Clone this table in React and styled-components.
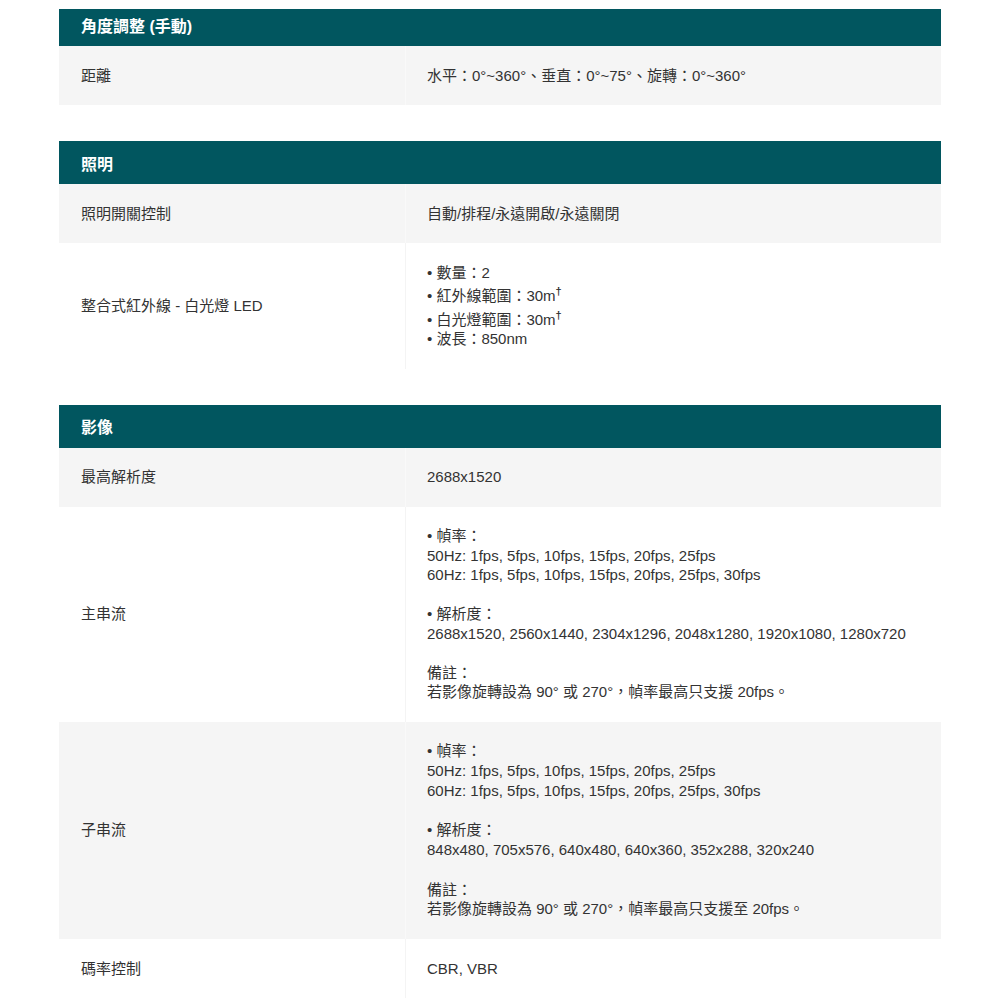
import React from "react";
import styled, { createGlobalStyle } from "styled-components";

const Global = createGlobalStyle`
  html, body { margin: 0; padding: 0; background: #ffffff; }
  body {
    font-family: "Liberation Sans", Arial, "Noto Sans CJK TC", sans-serif;
    color: #333333;
  }
`;

const Page = styled.div`
  width: 882px;
  padding: 9px 0 0 59px;
  display: flex;
  flex-direction: column;
  gap: 36px;
`;

const Table = styled.section`
  display: flex;
  flex-direction: column;
`;

const Header = styled.div`
  display: flex;
  align-items: center;
  height: ${(p) => (p.$clipped ? "37px" : "43px")};
  padding: ${(p) => (p.$clipped ? "0 22px 6px" : "0 22px")};
  box-sizing: border-box;
  background: #01565f;
  color: #ffffff;
  font-size: 16px;
  font-weight: 700;
`;

const Row = styled.div`
  display: grid;
  grid-template-columns: 346px 1fr;
  background: ${(p) => (p.$shaded ? "#f5f5f5" : "#ffffff")};
  font-size: 15px;
  line-height: 19.5px;
`;

const Label = styled.div`
  align-self: center;
  padding: 19.75px 22px;
`;

const Value = styled.div`
  display: flex;
  align-items: center;
  padding: 19.75px 22px 19.75px 21px;
  border-left: 1px solid ${(p) => (p.$shaded ? "#f9f9f9" : "#f4f4f4")};
`;

const Lines = styled.div`
  display: flex;
  flex-direction: column;
`;

const Line = styled.div`
  min-height: ${(p) => (p.$tall ? "19.75px" : "19.5px")};
  white-space: nowrap;
`;

const Sup = styled.sup`
  font-size: 11px;
  font-weight: 700;
  line-height: 19.5px;
`;

const data = [
  {
    title: "角度調整 (手動)",
    clipped: true,
    rows: [["距離", ["水平：0°~360°、垂直：0°~75°、旋轉：0°~360°"]]],
  },
  {
    title: "照明",
    rows: [
      ["照明開關控制", ["自動/排程/永遠開啟/永遠關閉"]],
      [
        "整合式紅外線 - 白光燈 LED",
        [
          "• 數量：2",
          ["• 紅外線範圍：30m", "†"],
          ["• 白光燈範圍：30m", "†"],
          "• 波長：850nm",
        ],
      ],
    ],
  },
  {
    title: "影像",
    rows: [
      ["最高解析度", ["2688x1520"]],
      [
        "主串流",
        [
          "• 幀率：",
          "50Hz: 1fps, 5fps, 10fps, 15fps, 20fps, 25fps",
          "60Hz: 1fps, 5fps, 10fps, 15fps, 20fps, 25fps, 30fps",
          "",
          "• 解析度：",
          "2688x1520, 2560x1440, 2304x1296, 2048x1280, 1920x1080, 1280x720",
          "",
          "備註：",
          "若影像旋轉設為 90° 或 270°，幀率最高只支援 20fps。",
        ],
      ],
      [
        "子串流",
        [
          "• 幀率：",
          "50Hz: 1fps, 5fps, 10fps, 15fps, 20fps, 25fps",
          "60Hz: 1fps, 5fps, 10fps, 15fps, 20fps, 25fps, 30fps",
          "",
          "• 解析度：",
          "848x480, 705x576, 640x480, 640x360, 352x288, 320x240",
          "",
          "備註：",
          "若影像旋轉設為 90° 或 270°，幀率最高只支援至 20fps。",
        ],
        true,
      ],
      ["碼率控制", ["CBR, VBR"]],
    ],
  },
];

export default function App() {
  return (
    <>
      <Global />
      <Page>
        {data.map((t) => (
          <Table key={t.title}>
            <Header $clipped={t.clipped}>{t.title}</Header>
            {t.rows.map(([label, lines, tall], i) => {
              const shaded = i % 2 === 0;
              return (
                <Row key={label} $shaded={shaded}>
                  <Label>{label}</Label>
                  <Value $shaded={shaded}>
                    <Lines>
                      {lines.map((l, j) => (
                        <Line key={j} $tall={tall}>
                          {Array.isArray(l) ? (
                            <>
                              {l[0]}
                              <Sup>{l[1]}</Sup>
                            </>
                          ) : (
                            l
                          )}
                        </Line>
                      ))}
                    </Lines>
                  </Value>
                </Row>
              );
            })}
          </Table>
        ))}
      </Page>
    </>
  );
}
